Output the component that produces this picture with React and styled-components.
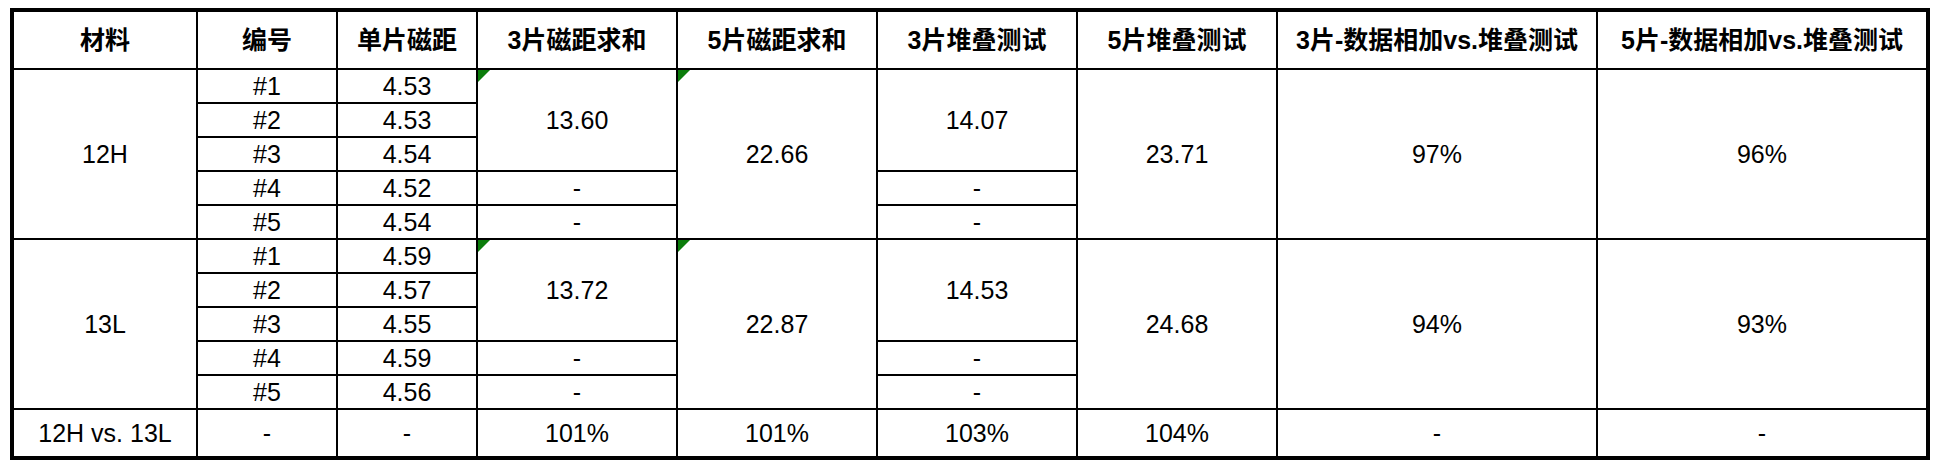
import styled, { createGlobalStyle } from "styled-components";

const GlobalStyle = createGlobalStyle`
  body {
    margin: 0;
    background: #fff;
    font-family: "Liberation Sans", Arial, "Noto Sans CJK SC", sans-serif;
    color: #000;
  }
`;

const Page = styled.div`
  padding: 8px 0 0 10px;
`;

const Frame = styled.div`
  width: 1912px;
  border: 4px solid #000;
`;

const Table = styled.table`
  width: 100%;
  table-layout: fixed;
  border-collapse: separate;
  border-spacing: 0;
  font-size: 25px;
`;

const Row = styled.tr`
  height: ${(p) => p.$h || 34}px;
`;

const Cell = styled.td`
  position: relative;
  padding: 0;
  text-align: center;
  vertical-align: middle;
  line-height: 28px;
  white-space: nowrap;
  font-weight: ${(p) => (p.$head ? 700 : 400)};
  border-right: ${(p) => (p.$last ? "none" : "2px solid #000")};
  border-bottom: ${(p) => (p.$bottom ? "none" : "2px solid #000")};
`;

// 左上角的绿色小三角（表格公式标记）
const Mark = styled.span`
  position: absolute;
  top: 0;
  left: 0;
  width: 0;
  height: 0;
  border-top: 12px solid #0b7d0b;
  border-right: 12px solid transparent;
`;

const widths = [184, 140, 140, 200, 200, 200, 200, 320, 328];

const headers = [
  "材料",
  "编号",
  "单片磁距",
  "3片磁距求和",
  "5片磁距求和",
  "3片堆叠测试",
  "5片堆叠测试",
  "3片-数据相加vs.堆叠测试",
  "5片-数据相加vs.堆叠测试",
];

const groups = [
  {
    name: "12H",
    single: ["4.53", "4.53", "4.54", "4.52", "4.54"],
    sum3: "13.60",
    sum5: "22.66",
    stack3: "14.07",
    stack5: "23.71",
    ratio3: "97%",
    ratio5: "96%",
  },
  {
    name: "13L",
    single: ["4.59", "4.57", "4.55", "4.59", "4.56"],
    sum3: "13.72",
    sum5: "22.87",
    stack3: "14.53",
    stack5: "24.68",
    ratio3: "94%",
    ratio5: "93%",
  },
];

const compare = ["12H vs. 13L", "-", "-", "101%", "101%", "103%", "104%", "-", "-"];

const Group = ({ g }) =>
  g.single.map((v, i) => {
    const no = `#${i + 1}`;
    if (i === 0) {
      return (
        <Row key={i}>
          <Cell rowSpan={5}>{g.name}</Cell>
          <Cell>{no}</Cell>
          <Cell>{v}</Cell>
          <Cell rowSpan={3}>
            <Mark />
            {g.sum3}
          </Cell>
          <Cell rowSpan={5}>
            <Mark />
            {g.sum5}
          </Cell>
          <Cell rowSpan={3}>{g.stack3}</Cell>
          <Cell rowSpan={5}>{g.stack5}</Cell>
          <Cell rowSpan={5}>{g.ratio3}</Cell>
          <Cell rowSpan={5} $last>
            {g.ratio5}
          </Cell>
        </Row>
      );
    }
    return (
      <Row key={i}>
        <Cell>{no}</Cell>
        <Cell>{v}</Cell>
        {i >= 3 && <Cell>-</Cell>}
        {i >= 3 && <Cell>-</Cell>}
      </Row>
    );
  });

export default function App() {
  return (
    <Page>
      <GlobalStyle />
      <Frame>
        <Table>
          <colgroup>
            {widths.map((w, i) => (
              <col key={i} style={{ width: w }} />
            ))}
          </colgroup>
          <tbody>
            <Row $h={58}>
              {headers.map((h, i) => (
                <Cell key={h} $head $last={i === headers.length - 1}>
                  {h}
                </Cell>
              ))}
            </Row>
            {groups.map((g) => (
              <Group key={g.name} g={g} />
            ))}
            <Row $h={46}>
              {compare.map((c, i) => (
                <Cell key={i} $bottom $last={i === compare.length - 1}>
                  {c}
                </Cell>
              ))}
            </Row>
          </tbody>
        </Table>
      </Frame>
    </Page>
  );
}
